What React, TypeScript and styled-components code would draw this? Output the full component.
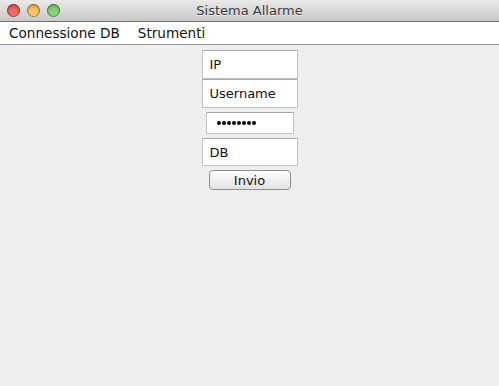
import React from "react";
import styled, { createGlobalStyle } from "styled-components";

const GlobalStyle = createGlobalStyle`
  html, body {
    margin: 0;
    padding: 0;
    background: #eeeeee;
  }
  body {
    font-family: "DejaVu Sans", "Liberation Sans", sans-serif;
  }
`;

const Window = styled.div`
  width: 499px;
  height: 386px;
  display: flex;
  flex-direction: column;
  background: #eeeeee;
  overflow: hidden;
`;

const TitleBar = styled.div`
  height: 22px;
  flex: none;
  display: flex;
  align-items: center;
  position: relative;
  background: linear-gradient(#e9e9e9, #c9c9c9);
  border-bottom: 1px solid #6f6f6f;
  box-sizing: border-box;
`;

const Lights = styled.div`
  display: flex;
  gap: 7px;
  padding-left: 7px;
  position: relative;
  z-index: 1;
`;

const Light = styled.span<{ $c: string; $d: string }>`
  width: 13px;
  height: 13px;
  border-radius: 50%;
  background: radial-gradient(circle at 50% 70%, ${(p) => p.$c} 30%, ${(p) => p.$d} 100%);
  box-shadow: inset 0 0 0 1px rgba(0, 0, 0, 0.35);
`;

const Title = styled.div`
  position: absolute;
  left: 0;
  right: 0;
  text-align: center;
  font-size: 13px;
  color: #3a3a3a;
  text-shadow: 0 1px 0 rgba(255, 255, 255, 0.6);
`;

const MenuBar = styled.div`
  height: 22px;
  flex: none;
  display: flex;
  align-items: center;
  gap: 18px;
  padding-left: 9px;
  background: #ffffff;
  border-bottom: 1px solid #9a9a9a;
  font-size: 13.6px;
  color: #111;
`;

const Form = styled.div`
  display: flex;
  flex-direction: column;
  align-items: center;
  padding-top: 5px;
`;

const Field = styled.div<{ $w: number; $h: number; $mt: number }>`
  width: ${(p) => p.$w}px;
  height: ${(p) => p.$h}px;
  margin-top: ${(p) => p.$mt}px;
  box-sizing: border-box;
  background: #ffffff;
  border: 1px solid #c3c3c3;
  border-top-color: #a8a8a8;
  display: flex;
  align-items: center;
  padding-left: 7px;
  font-size: 13px;
  color: #111;
`;

const Mask = styled.div`
  display: flex;
  gap: 1px;
  padding-left: 3px;
`;

const Dot = styled.span`
  width: 4px;
  height: 4px;
  border-radius: 50%;
  background: #000;
`;

const Button = styled.button`
  margin-top: 4px;
  width: 82px;
  height: 20px;
  box-sizing: border-box;
  border: 1px solid #8f8f8f;
  border-radius: 4px;
  background: linear-gradient(#ffffff, #ececec 60%, #e2e2e2);
  font-family: "DejaVu Sans", sans-serif;
  font-size: 13px;
  color: #111;
  padding: 0;
`;

export default function App() {
  return (
    <Window>
      <GlobalStyle />
      <TitleBar>
        <Lights>
          <Light $c="#f36b63" $d="#b8322c" />
          <Light $c="#f7c46a" $d="#c08a2c" />
          <Light $c="#8ad27a" $d="#4a9a3c" />
        </Lights>
        <Title>Sistema Allarme</Title>
      </TitleBar>
      <MenuBar>
        <span>Connessione DB</span>
        <span>Strumenti</span>
      </MenuBar>
      <Form>
        <Field $w={96} $h={29} $mt={0}>IP</Field>
        <Field $w={96} $h={29} $mt={0}>Username</Field>
        <Field $w={88} $h={22} $mt={4}>
          <Mask>
            {Array.from({ length: 8 }).map((_, i) => (
              <Dot key={i} />
            ))}
          </Mask>
        </Field>
        <Field $w={96} $h={28} $mt={4}>DB</Field>
        <Button>Invio</Button>
      </Form>
    </Window>
  );
}
